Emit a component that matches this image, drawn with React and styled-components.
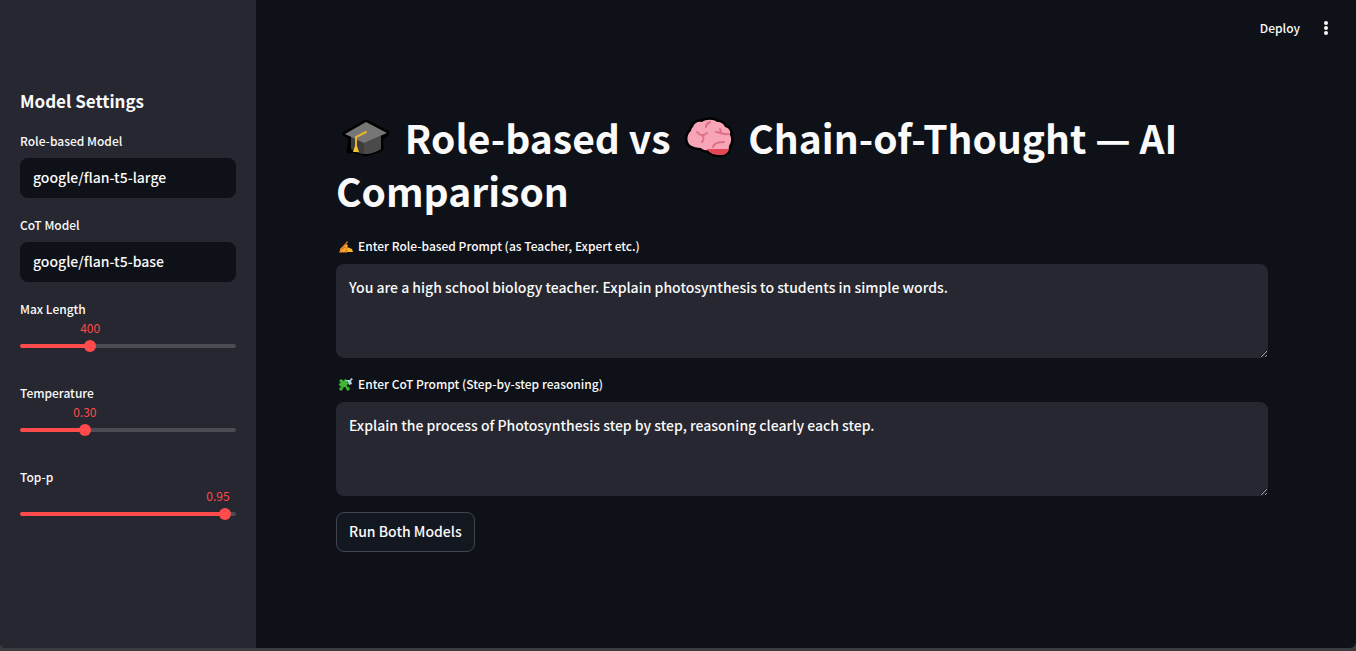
import React, { useId, useState } from "react";
import styled, { createGlobalStyle } from "styled-components";

const GlobalStyle = createGlobalStyle`
  *, *::before, *::after { box-sizing: border-box; }
  body {
    margin: 0;
    background: #3b3c3f;
    color: #fafafa;
    color-scheme: dark;
    font-family: "Noto Sans CJK JP", "Noto Sans", sans-serif;
    font-size: 14px;
    font-weight: 500;
  }
  button, input, textarea { font: inherit; color: inherit; }
`;

const Shell = styled.div`
  min-height: calc(100vh - 3px);
  display: grid;
  grid-template-columns: 256px minmax(0, 1fr);
  background: #0e1117;
  border-radius: 0 0 6px 6px;
  overflow: hidden;
`;

const Sidebar = styled.aside`
  display: flex;
  flex-direction: column;
  gap: 17px;
  padding: 87px 20px 24px;
  background: #262730;
`;

const SidebarTitle = styled.h2`
  margin: 0;
  font-size: 17px;
  font-weight: 700;
  line-height: 27px;
`;

const Main = styled.div`
  display: flex;
  flex-direction: column;
`;

const Header = styled.header`
  display: flex;
  justify-content: flex-end;
  align-items: center;
  gap: 16px;
  height: 56px;
  padding: 0 20px;
`;

const HeaderButton = styled.button`
  display: flex;
  align-items: center;
  padding: 0;
  border: 0;
  background: none;
  font-size: 12px;
  line-height: 20px;
  cursor: pointer;
`;

const Content = styled.main`
  display: flex;
  flex-direction: column;
  align-items: stretch;
  gap: 16px;
  padding: 55px 88px 40px 80px;
`;

const Title = styled.h1`
  margin: 0 0 3px;
  font-size: 39px;
  font-weight: 700;
  line-height: 53px;
`;

const TitleIcon = styled.svg`
  width: 60px;
  height: 48px;
  vertical-align: -8px;
`;

const Field = styled.div`
  display: flex;
  flex-direction: column;
  gap: ${(p) => (p.$wide ? 8 : 7)}px;
`;

const Label = styled.label`
  display: flex;
  align-items: center;
  gap: 4px;
  font-size: 12px;
  line-height: 20px;
`;

const LabelIcon = styled.svg`
  width: 18px;
  height: 18px;
`;

const TextInput = styled.input`
  width: 100%;
  height: 40px;
  padding: 0 13px 2px;
  border: 0;
  border-radius: 8px;
  background: #0e1117;
  outline: none;
`;

const TextArea = styled.textarea`
  display: block;
  width: 100%;
  height: 94px;
  padding: 12px 13px;
  border: 0;
  border-radius: 8px;
  background: #262730;
  line-height: 22px;
  outline: none;
  resize: vertical;
`;

const RunButton = styled.button`
  align-self: flex-start;
  height: 40px;
  padding: 0 12px 2px;
  border: 1px solid #41444c;
  border-radius: 8px;
  background: #13171f;
  cursor: pointer;
`;

const SliderField = styled.div`
  padding-bottom: 18px;
`;

const SliderValue = styled.output`
  display: block;
  width: max-content;
  margin-bottom: 7px;
  transform: translateX(-50%);
  color: #ff4b4b;
  font-size: 12px;
  font-weight: 400;
  line-height: 18px;
`;

const Track = styled.div`
  display: flex;
  align-items: center;
  height: 4px;
  border-radius: 2px;
`;

const Range = styled.input`
  appearance: none;
  flex: 1;
  min-width: 0;
  height: 12px;
  margin: 0 -6px;
  background: transparent;
  outline: none;
  cursor: pointer;
  &::-webkit-slider-thumb {
    appearance: none;
    width: 12px;
    height: 12px;
    border-radius: 50%;
    background: #ff4b4b;
  }
`;

function TextField({ label, initial }) {
  const id = useId();
  return (
    <Field>
      <Label htmlFor={id}>{label}</Label>
      <TextInput id={id} type="text" defaultValue={initial} />
    </Field>
  );
}

function Slider({ label, min, max, step, initial, digits }) {
  const id = useId();
  const [value, setValue] = useState(initial);
  const percent = ((value - min) / (max - min)) * 100;
  return (
    <SliderField>
      <Label htmlFor={id}>{label}</Label>
      <SliderValue
        htmlFor={id}
        style={{ marginLeft: `min(${percent}%, calc(100% - 18px))` }}
      >
        {value.toFixed(digits)}
      </SliderValue>
      <Track
        style={{
          background: `linear-gradient(to right, #ff4b4b ${percent}%, #4b4c54 ${percent}%)`,
        }}
      >
        <Range
          id={id}
          type="range"
          min={min}
          max={max}
          step={step}
          value={value}
          onChange={(e) => setValue(Number(e.target.value))}
        />
      </Track>
    </SliderField>
  );
}

function PromptField({ icon, label, initial }) {
  const id = useId();
  return (
    <Field $wide>
      <Label htmlFor={id}>
        {icon}
        {label}
      </Label>
      <TextArea id={id} defaultValue={initial} />
    </Field>
  );
}

const CapIcon = () => (
  <TitleIcon viewBox="0 0 60 48" aria-hidden="true">
    <path
      d="M9 20 30 8l21 11-6 5v11l-15 5-13-4-4 1 2-13z"
      fill="#000"
      stroke="#000"
      strokeWidth="5"
      strokeLinejoin="round"
    />
    <path d="M15 22h30v13q-8 5-16 5-8 0-14-5z" fill="#3d3d3d" />
    <path d="M28 29 45 22v13q-8 5-17 5z" fill="#4a4a4a" />
    <path d="M9 20 30 8l21 11-23 10z" fill="#767676" />
    <path d="M30 18 20 23v12" fill="none" stroke="#e5b52c" strokeWidth="2" strokeLinecap="round" />
    <path d="m19 32-2 6h6l-2-6z" fill="#f4c430" />
  </TitleIcon>
);

const brainShape =
  "M14 13c1-4 5-6 9-5 4-3 12-3 15 0 4 0 7 2 8 5 4 1 6 4 5 8 2 4 1 8-1 11 0 5-3 8-8 8-5 1-10 0-13-4-3 1-6-1-7-2-4 0-8-1-11-3-4-4-3-11 1-14 0-2 1-3 2-4z";

const BrainIcon = () => (
  <TitleIcon viewBox="0 0 60 48" aria-hidden="true">
    <path d={brainShape} fill="#000" stroke="#000" strokeWidth="5" strokeLinejoin="round" />
    <path d={brainShape} fill="#f8a5b8" />
    <path d="M28 35h22c-1 4-4 6-8 6-6 0-11-1-14-6z" fill="#e44857" />
    <path
      d="M27 13c0-3 2-4 4-5M18 18c3 4 7 4 10 1M23 21c2 2 2 5 0 7M37 18c5 0 5 3 13 2M42 19c0-2 0-3-1-4M34 33c1-4 5-5 11-5"
      fill="none"
      stroke="#dd7185"
      strokeWidth="2"
      strokeLinecap="round"
    />
  </TitleIcon>
);

const WritingIcon = () => (
  <LabelIcon viewBox="0 0 18 18" aria-hidden="true">
    <path d="M4 12 9 7l3 1-1 2 5 2 1 3H4z" fill="#f9b62c" />
    <path d="m6 13 3-3 2 1-2 2 3 1" fill="none" stroke="#d97818" />
    <path d="m3 15 8-11 1 1-7 9z" fill="#e86d28" />
    <path d="M3 15h8" stroke="#ef7b3a" />
  </LabelIcon>
);

const PuzzleIcon = () => (
  <LabelIcon viewBox="0 0 18 18" aria-hidden="true">
    <path
      d="m3 6 2-2 3 2c0-3 4-2 3 1l2 2c-3 0-3 3 0 3l1 2-2 2-2-2c0-3-3-2-3 0l-2 2-2-2 2-3c-3 0-3-3 0-3z"
      fill="#3fb535"
    />
    <path d="m9 5 3 2 1 3 3-1-1-3 2-2-2-1-1 2z" fill="#a9d7dc" />
    <path d="m4 14 2-2M11 12l2 2" stroke="#258c29" />
  </LabelIcon>
);

const MenuDots = () => (
  <svg width="20" height="20" viewBox="0 0 20 20" fill="#fafafa" aria-hidden="true">
    <circle cx="10" cy="5" r="2" />
    <circle cx="10" cy="10" r="2" />
    <circle cx="10" cy="15" r="2" />
  </svg>
);

export default function App() {
  return (
    <>
      <GlobalStyle />
      <Shell>
        <Sidebar>
          <SidebarTitle>Model Settings</SidebarTitle>
          <TextField label="Role-based Model" initial="google/flan-t5-large" />
          <TextField label="CoT Model" initial="google/flan-t5-base" />
          <Slider label="Max Length" min={100} max={1024} step={1} initial={400} digits={0} />
          <Slider label="Temperature" min={0} max={1} step={0.01} initial={0.3} digits={2} />
          <Slider label="Top-p" min={0} max={1} step={0.01} initial={0.95} digits={2} />
        </Sidebar>
        <Main>
          <Header>
            <HeaderButton type="button">Deploy</HeaderButton>
            <HeaderButton type="button" aria-label="Menu">
              <MenuDots />
            </HeaderButton>
          </Header>
          <Content>
            <Title>
              <CapIcon /> Role-based vs <BrainIcon /> Chain-of-Thought — AI Comparison
            </Title>
            <PromptField
              icon={<WritingIcon />}
              label="Enter Role-based Prompt (as Teacher, Expert etc.)"
              initial="You are a high school biology teacher. Explain photosynthesis to students in simple words."
            />
            <PromptField
              icon={<PuzzleIcon />}
              label="Enter CoT Prompt (Step-by-step reasoning)"
              initial="Explain the process of Photosynthesis step by step, reasoning clearly each step."
            />
            <RunButton type="button">Run Both Models</RunButton>
          </Content>
        </Main>
      </Shell>
    </>
  );
}
